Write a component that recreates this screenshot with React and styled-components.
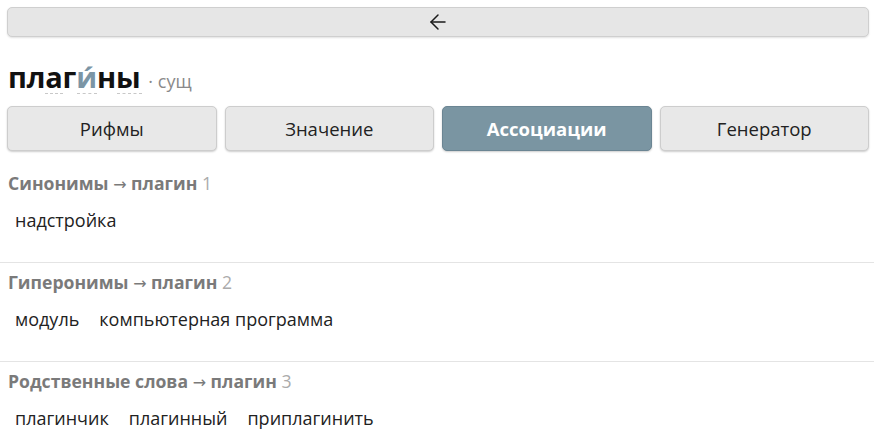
import React from "react";
import styled, { createGlobalStyle } from "styled-components";
import { ArrowLeft } from "lucide-react";

const Global = createGlobalStyle`
  html, body { margin: 0; padding: 0; background: #fff; }
  body { font-family: "Open Sans", "Noto Sans", sans-serif; color: #222; }
`;

const Page = styled.div`
  padding: 7px 5px 0 7px;
  display: flex;
  flex-direction: column;
`;

const BackButton = styled.button`
  height: 30px;
  display: flex;
  align-items: center;
  justify-content: center;
  background: #e6e6e6;
  border: 1px solid #cfcfcf;
  border-radius: 5px;
  box-shadow: 0 1px 2px rgba(0, 0, 0, 0.12);
  color: #1a1a1a;
  padding: 0;
`;

const TitleRow = styled.div`
  display: flex;
  align-items: baseline;
  gap: 8px;
  margin-top: 20px;
  padding-left: 1px;
  height: 42px;
  position: relative;
`;

const Word = styled.h1`
  margin: 0;
  font-size: 29px;
  font-weight: 700;
  color: #111;
  letter-spacing: -0.2px;
`;

const Stress = styled.span`
  color: #7b95a5;
`;

const Dots = styled.div`
  position: absolute;
  left: 0;
  top: 36px;
  display: flex;
`;

const Dot = styled.span`
  margin-left: ${(p) => p.$ml}px;
  width: ${(p) => p.$w}px;
  border-bottom: 1px dashed #c8c8c8;
`;

const Pos = styled.span`
  font-size: 18px;
  color: #8a8a8a;
`;

const Tabs = styled.div`
  display: grid;
  grid-template-columns: repeat(4, 1fr);
  gap: 8px;
  margin-top: 7px;
`;

const Tab = styled.button`
  height: 45px;
  font-family: inherit;
  font-size: 18.5px;
  font-weight: ${(p) => (p.$active ? 700 : 400)};
  color: ${(p) => (p.$active ? "#fff" : "#222")};
  background: ${(p) => (p.$active ? "#7a95a2" : "#e8e8e8")};
  border: 1px solid ${(p) => (p.$active ? "#6b8593" : "#cdcdcd")};
  border-radius: 5px;
  box-shadow: 0 1px 2px rgba(0, 0, 0, 0.2);
  padding: 0;
`;

const Section = styled.section`
  display: flex;
  flex-direction: column;
  padding-top: ${(p) => (p.$first ? 20 : 7)}px;
  padding-bottom: 28px;
  border-bottom: ${(p) => (p.$last ? "none" : "1px solid #e4e4e4")};
  margin: 0 -5px 0 -7px;
  padding-left: 8px;
`;

const Heading = styled.div`
  font-size: 17.6px;
  font-weight: 700;
  color: #7a7a7a;
  line-height: 24px;
  height: 24px;
`;

const Arrow = styled.span`
  font-family: "DejaVu Sans", sans-serif;
  font-weight: 400;
  font-size: 16px;
  line-height: 1;
`;

const Count = styled.span`
  font-weight: 400;
  color: #ababab;
`;

const Words = styled.div`
  display: flex;
  gap: 6px;
  margin-top: 11px;
`;

const Item = styled.span`
  font-size: 18px;
  color: #222;
  padding: 2px 7px;
  line-height: 24px;
`;

const sections = [
  { title: "Синонимы", n: 1, words: ["надстройка"] },
  { title: "Гиперонимы", n: 2, words: ["модуль", "компьютерная программа"] },
  { title: "Родственные слова", n: 3, words: ["плагинчик", "плагинный", "приплагинить"] },
];

export default function App() {
  return (
    <>
      <Global />
      <Page>
        <BackButton aria-label="назад">
          <ArrowLeft size={24} strokeWidth={1.5} />
        </BackButton>
        <TitleRow>
          <Word>
            плаг<Stress>и́</Stress>ны
          </Word>
          <Pos>· сущ</Pos>
          <Dots>
            <Dot $ml={38} $w={18} />
            <Dot $ml={14} $w={20} />
            <Dot $ml={20} $w={25} />
          </Dots>
        </TitleRow>
        <Tabs>
          <Tab>Рифмы</Tab>
          <Tab>Значение</Tab>
          <Tab $active>Ассоциации</Tab>
          <Tab>Генератор</Tab>
        </Tabs>
        {sections.map((s, i) => (
          <Section key={s.title} $first={i === 0} $last={i === sections.length - 1}>
            <Heading>
              {s.title} <Arrow>→</Arrow> плагин <Count>{s.n}</Count>
            </Heading>
            <Words>
              {s.words.map((w) => (
                <Item key={w}>{w}</Item>
              ))}
            </Words>
          </Section>
        ))}
      </Page>
    </>
  );
}
